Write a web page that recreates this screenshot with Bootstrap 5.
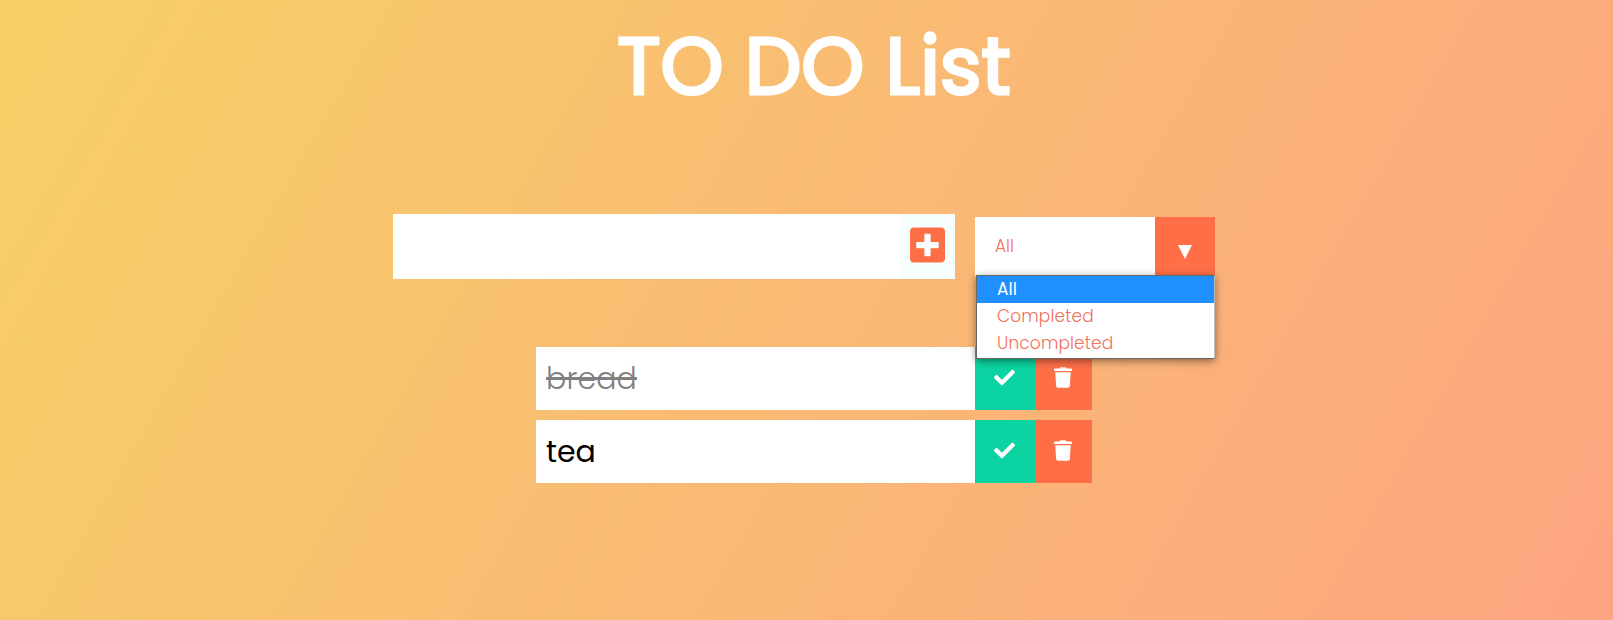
<!DOCTYPE html>
<html lang="en">
<head>
<meta charset="utf-8">
<meta name="viewport" content="width=device-width, initial-scale=1">
<title>TO DO List</title>
<link rel="stylesheet" href="https://cdn.jsdelivr.net/npm/bootstrap@5.3.0/dist/css/bootstrap.min.css">
<style>
  body {
    font-family: Poppins, Inter, "Liberation Sans", sans-serif;
    font-feature-settings: "cv11";
    background: linear-gradient(120deg, #f6d066 0%, #fda481 100%) no-repeat;
    min-height: 620px;
    color: #fff;
  }
  .page-title { height: 134px; padding-left: 15px; }
  .page-title h1 { font-size: 80px; line-height: 133px; font-weight: 400; -webkit-text-stroke: 3.2px #fff; }
  .todo-form { margin: 80px 0 0 393px; height: 65px; }
  .entry { width: 562px; }
  .todo-input { width: 507px; }
  .add-btn { width: 55px; background: #f7fffe; }
  .add-btn svg { margin-bottom: 4px; }
  .filter { width: 240px; height: 59px; margin: 3px 0 0 20px; color: #f1705a; }
  .filter-value { font-size: 17px; font-weight: 300; padding: 1px 0 0 20px; }
  .filter-arrow { width: 60px; background: #ff6f47; }
  .filter-arrow svg { margin-top: 10px; }
  .filter-menu { top: 58px; left: 1px; width: 239px; height: 84px; border: 1px solid #666; border-right-color: #bbb; box-shadow: 0 2px 8px rgba(0,0,0,.45); font-size: 17px; font-weight: 300; z-index: 5; }
  .filter-menu li { height: 27px; line-height: 27px; padding-left: 20px; letter-spacing: .15px; }
  .filter-menu li.chosen { background: #1e90ff; color: #fff; font-weight: 400; letter-spacing: 0; }
  .todo-list { margin: 68px 0 0 536px; width: 556px; gap: 10px; }
  .todo { height: 63px; }
  .todo-text { font-size: 30px; line-height: 64px; padding-left: 10px; color: #000; }
  .done-text { color: #808080; font-weight: 300; letter-spacing: .15px; text-decoration: line-through; text-decoration-thickness: 3px; }
  .check-btn { width: 60px; background: #0bd4a2; }
  .trash-btn { width: 57px; background: #ff6f47; }
  .todo svg { margin: 0 2px 3px 0; }
</style>
</head>
<body>
<header class="page-title text-center"><h1 class="m-0">TO DO List</h1></header>
<form class="todo-form d-flex">
  <div class="entry d-flex">
    <input type="text" class="todo-input form-control border-0 rounded-0 bg-white shadow-none" aria-label="New item">
    <button type="button" class="add-btn btn p-0 border-0 rounded-0 d-flex align-items-center justify-content-center" aria-label="Add">
      <svg width="35" height="40" viewBox="0 0 448 512" fill="#ff6f47"><path d="M400 32H48C21.500 32 0 53.500 0 80v352c0 26.500 21.500 48 48 48h352c26.500 0 48-21.500 48-48V80c0-26.500-21.500-48-48-48zm-32 252c0 6.600-5.400 12-12 12h-92v92c0 6.600-5.400 12-12 12h-56c-6.600 0-12-5.400-12-12v-92H92c-6.600 0-12-5.400-12-12v-56c0-6.600 5.400-12 12-12h92v-92c0-6.600 5.400-12 12-12h56c6.600 0 12 5.400 12 12v92h92c6.600 0 12 5.400 12 12v56z"/></svg>
    </button>
  </div>
  <div class="filter position-relative d-flex">
    <div class="filter-value bg-white flex-grow-1 d-flex align-items-center">All</div>
    <div class="filter-arrow d-flex align-items-center justify-content-center"><svg width="14" height="14" viewBox="0 0 14 14" fill="#fff"><path d="M0 0h14L7 14z"/></svg></div>
    <ul class="filter-menu position-absolute list-unstyled m-0 bg-white">
      <li class="chosen">All</li>
      <li>Completed</li>
      <li>Uncompleted</li>
    </ul>
  </div>
</form>
<ul class="todo-list list-unstyled d-flex flex-column mb-0">
  <li class="todo d-flex bg-white">
    <span class="todo-text flex-grow-1"><span class="done-text">bread</span></span>
    <button type="button" class="check-btn btn p-0 border-0 rounded-0" aria-label="Complete"><svg width="21" height="21" viewBox="0 0 512 512" fill="#fff"><path d="M173.898 439.404l-166.400-166.400c-9.997-9.997-9.997-26.206 0-36.204l36.203-36.204c9.997-9.998 26.207-9.998 36.204 0L192 312.690 432.095 72.596c9.997-9.997 26.207-9.997 36.204 0l36.203 36.204c9.997 9.997 9.997 26.206 0 36.204l-294.400 294.401c-9.998 9.997-26.207 9.997-36.204-.001z"/></svg></button>
    <button type="button" class="trash-btn btn p-0 border-0 rounded-0" aria-label="Delete"><svg width="18" height="21" viewBox="0 0 448 512" fill="#fff"><path d="M432 32H312l-9.400-18.700A24 24 0 0 0 281.100 0H166.800a23.720 23.720 0 0 0-21.400 13.300L136 32H16A16 16 0 0 0 0 48v32a16 16 0 0 0 16 16h416a16 16 0 0 0 16-16V48a16 16 0 0 0-16-16zM53.200 467a48 48 0 0 0 47.900 45h245.800a48 48 0 0 0 47.900-45L416 128H32z"/></svg></button>
  </li>
  <li class="todo d-flex bg-white">
    <span class="todo-text flex-grow-1">tea</span>
    <button type="button" class="check-btn btn p-0 border-0 rounded-0" aria-label="Complete"><svg width="21" height="21" viewBox="0 0 512 512" fill="#fff"><path d="M173.898 439.404l-166.400-166.400c-9.997-9.997-9.997-26.206 0-36.204l36.203-36.204c9.997-9.998 26.207-9.998 36.204 0L192 312.690 432.095 72.596c9.997-9.997 26.207-9.997 36.204 0l36.203 36.204c9.997 9.997 9.997 26.206 0 36.204l-294.400 294.401c-9.998 9.997-26.207 9.997-36.204-.001z"/></svg></button>
    <button type="button" class="trash-btn btn p-0 border-0 rounded-0" aria-label="Delete"><svg width="18" height="21" viewBox="0 0 448 512" fill="#fff"><path d="M432 32H312l-9.400-18.700A24 24 0 0 0 281.100 0H166.800a23.720 23.720 0 0 0-21.400 13.300L136 32H16A16 16 0 0 0 0 48v32a16 16 0 0 0 16 16h416a16 16 0 0 0 16-16V48a16 16 0 0 0-16-16zM53.200 467a48 48 0 0 0 47.900 45h245.800a48 48 0 0 0 47.900-45L416 128H32z"/></svg></button>
  </li>
</ul>
<script src="https://cdn.jsdelivr.net/npm/bootstrap@5.3.0/dist/js/bootstrap.bundle.min.js"></script>
</body>
</html>
